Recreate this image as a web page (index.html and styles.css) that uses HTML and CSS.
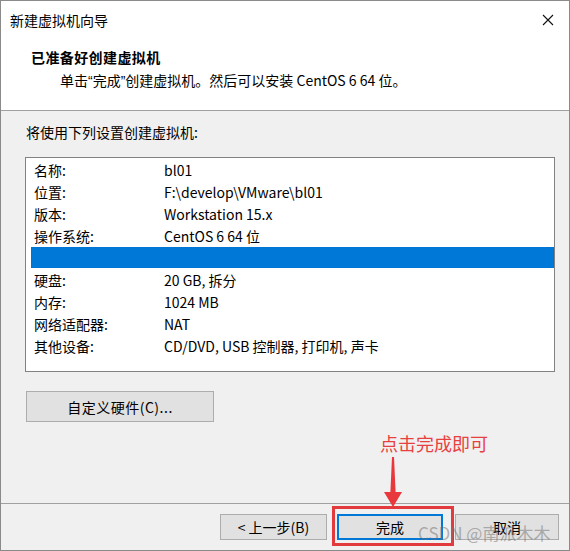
FILE: index.html
```html
<!DOCTYPE html>
<html lang="zh-CN">
<head>
<meta charset="utf-8">
<title>新建虚拟机向导</title>
<link rel="stylesheet" href="styles.css">
</head>
<body>
<div class="window">
  <div class="titlebar">
    <span class="title">新建虚拟机向导</span>
    <svg class="close" width="12" height="12" viewBox="0 0 12 12"><path d="M1 1 L11 11 M11 1 L1 11" stroke="#111" stroke-width="1.1" fill="none"/></svg>
  </div>
  <div class="header">
    <div class="heading">已准备好创建虚拟机</div>
    <div class="subheading">单击<span class="q">“</span>完成<span class="q">”</span>创建虚拟机。然后可以安装 CentOS 6 64 位。</div>
  </div>
  <div class="content">
    <div class="intro">将使用下列设置创建虚拟机:</div>
    <div class="list">
      <div class="row"><span class="label">名称:</span><span class="value">bl01</span></div>
      <div class="row"><span class="label">位置:</span><span class="value">F:\develop\VMware\bl01</span></div>
      <div class="row"><span class="label">版本:</span><span class="value">Workstation 15.x</span></div>
      <div class="row"><span class="label">操作系统:</span><span class="value">CentOS 6 64 位</span></div>
      <div class="row selected"><span class="label"></span><span class="value"></span></div>
      <div class="row"><span class="label">硬盘:</span><span class="value">20 GB, 拆分</span></div>
      <div class="row"><span class="label">内存:</span><span class="value">1024 MB</span></div>
      <div class="row"><span class="label">网络适配器:</span><span class="value">NAT</span></div>
      <div class="row"><span class="label">其他设备:</span><span class="value">CD/DVD, USB 控制器, 打印机, 声卡</span></div>
    </div>
    <button class="btn custom">自定义硬件(C)...</button>
  </div>
  <div class="footer">
    <button class="btn back">&lt; 上一步(B)</button>
    <button class="btn finish">完成</button>
    <button class="btn cancel">取消</button>
  </div>

  <div class="note">点击完成即可</div>
  <svg class="arrow" width="28" height="56" viewBox="0 0 28 56"><polygon points="12,2 14,2 15.6,37 22,37 13,52 4,37 10.4,37" fill="#e8383d"/></svg>
  <div class="redbox"></div>
  <div class="watermark">CSDN @南派木木</div>
</div>
</body>
</html>
```

FILE: styles.css
```css
* { box-sizing: border-box; }
html, body { margin: 0; padding: 0; }
body {
  width: 570px;
  height: 551px;
  font-family: "Noto Sans CJK SC", sans-serif;
  font-size: 14px;
  color: #000;
  background: #fff;
}
.window {
  position: relative;
  width: 570px;
  height: 551px;
  border: 1px solid #8a8a8a;
  display: flex;
  flex-direction: column;
  background: #f0f0f0;
}
.titlebar {
  height: 37px;
  background: #fff;
  display: flex;
  align-items: center;
  justify-content: space-between;
  padding-left: 9px;
  padding-right: 15px;
}
.title { font-size: 14px; line-height: 20px; }
.close { display: block; }
.header {
  background: #fff;
  height: 73px;
  border-bottom: 1px solid #a0a0a0;
  padding: 9px 0 0 30px;
}
.heading { font-weight: bold; line-height: 20px; letter-spacing: 0.4px; }
.subheading { line-height: 20px; margin-top: 3px; padding-left: 29px; }
.q { font-family: "Liberation Sans", sans-serif; }
.content {
  flex: 1;
  padding: 11px 0 0 24px;
}
.intro { line-height: 20px; margin-left: 1px; }
.list {
  margin-top: 15px;
  width: 530px;
  height: 215px;
  background: #fff;
  border: 1px solid #828282;
  padding: 1px 0 0 5px;
}
.row {
  height: 22px;
  display: flex;
  align-items: center;
  padding-left: 3px;
  line-height: 20px;
}
.row.selected {
  background: #0078d7;
  border: 1px dotted #5a5a5a;
  height: 21px;
  margin-bottom: 1px;
}
.label { width: 130px; flex: none; }
.value { white-space: nowrap; }
.btn {
  font-family: "Noto Sans CJK SC", sans-serif;
  font-size: 14px;
  color: #000;
  background: #e1e1e1;
  border: 1px solid #adadad;
  padding: 0;
  line-height: 20px;
}
.custom {
  display: block;
  margin: 19px 0 0 1px;
  width: 188px;
  height: 31px;
  letter-spacing: 0.5px;
}
.footer {
  height: 47px;
  border-top: 1px solid #a0a0a0;
  display: flex;
  align-items: flex-start;
  padding: 10px 0 0 219px;
}
.back { width: 107px; height: 26px; }
.finish { width: 106px; height: 26px; margin-left: 10px; border: 2px solid #0078d7; }
.cancel { width: 104px; height: 26px; margin-left: 12px; }
.note {
  position: absolute;
  left: 379px;
  top: 430px;
  font-size: 18px;
  line-height: 24px;
  color: #e8403f;
}
.arrow { position: absolute; left: 379px; top: 454px; }
.redbox {
  position: absolute;
  left: 331px;
  top: 505px;
  width: 122px;
  height: 40px;
  border: 3px solid #e33a3e;
}
.watermark {
  position: absolute;
  left: 417px;
  top: 520px;
  font-size: 17px;
  line-height: 24px;
  color: rgba(110, 110, 110, 0.5);
  white-space: nowrap;
}
```
